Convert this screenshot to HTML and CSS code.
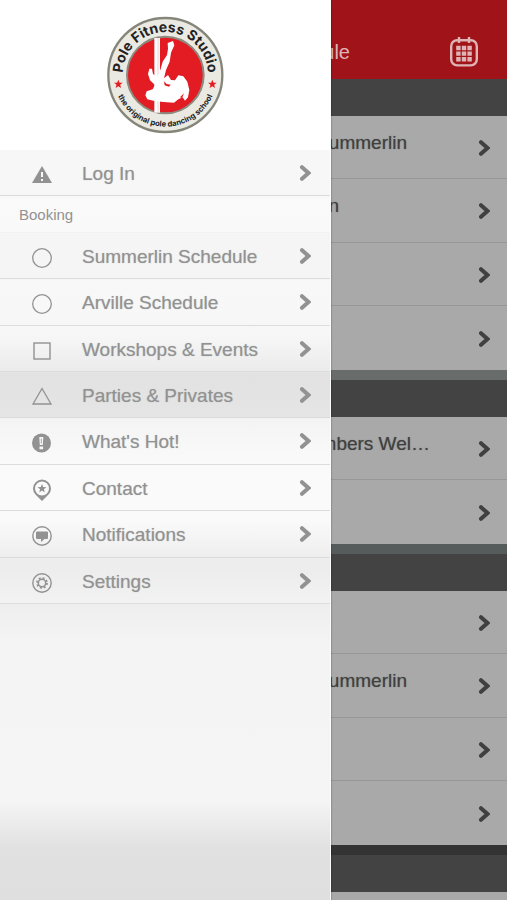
FILE: index.html
```
<!DOCTYPE html>
<html lang="en">
<head>
    <meta charset="UTF-8">
    <meta name="viewport" content="width=device-width,initial-scale=1.0">
    <title>Pole Fitness Studio</title>
    <link rel="stylesheet" href="styles.css">
</head>
<body>
    <svg class="sprite" width="0" height="0" aria-hidden="true">
        <symbol id="chevron" viewBox="0 0 12 16">
            <path d="M3 2.200 L9.500 8 L3 13.800" fill="none" stroke="currentColor" stroke-width="4" stroke-linecap="round" stroke-linejoin="miter"/>
        </symbol>
    </svg>
    <div class="app">
        <main class="schedule">
            <header class="topbar">
                <h1>Schedule</h1>
                <button class="calendar" type="button" aria-label="Calendar">
                    <svg width="28" height="30" viewBox="0 0 28 30" fill="none" stroke="currentColor">
                        <rect x="1.2" y="3.2" width="25.6" height="25.2" rx="6" stroke-width="2.4"/>
                        <path d="M9 0v6M19 0v6" stroke-width="2.4"/>
                        <path d="M6.200 11h15.600M6.200 16.600h15.600M6.200 22.200h15.600" stroke-width="4.4" stroke-dasharray="4.4 1.2"/>
                    </svg>
                </button>
            </header>
            <section>
                <div class="day"></div>
                <ul class="classes">
                    <li><a href="#"><span class="name">Summerlin</span><svg class="chevron"><use href="#chevron"/></svg></a></li>
                    <li><a href="#"><span class="name short">n</span><svg class="chevron"><use href="#chevron"/></svg></a></li>
                    <li><a href="#" aria-label="Class"><svg class="chevron"><use href="#chevron"/></svg></a></li>
                    <li><a href="#" aria-label="Class"><svg class="chevron"><use href="#chevron"/></svg></a></li>
                </ul>
            </section>
            <section>
                <div class="day"></div>
                <ul class="classes">
                    <li><a href="#"><span class="name long">Members Wel…</span><svg class="chevron"><use href="#chevron"/></svg></a></li>
                    <li><a href="#" aria-label="Class"><svg class="chevron"><use href="#chevron"/></svg></a></li>
                </ul>
            </section>
            <section>
                <div class="day"></div>
                <ul class="classes">
                    <li><a href="#" aria-label="Class"><svg class="chevron"><use href="#chevron"/></svg></a></li>
                    <li><a href="#"><span class="name">Summerlin</span><svg class="chevron"><use href="#chevron"/></svg></a></li>
                    <li><a href="#" aria-label="Class"><svg class="chevron"><use href="#chevron"/></svg></a></li>
                    <li><a href="#" aria-label="Class"><svg class="chevron"><use href="#chevron"/></svg></a></li>
                </ul>
            </section>
            <section>
                <div class="day"></div>
                <ul class="classes">
                    <li></li>
                </ul>
            </section>
        </main>

        <nav class="drawer">
            <div class="brand">
                <svg class="logo" viewBox="0 0 390 390" role="img" aria-label="Pole Fitness Studio">
                    <defs>
                        <path id="arc-top" d="M69 210 A128 128 0 1 1 323 210"/>
                        <path id="arc-bottom" d="M41 195 A155 155 0 0 0 351 195"/>
                    </defs>
                    <circle cx="196" cy="195" r="171" fill="#eae9e2" stroke="#85857a" stroke-width="7"/>
                    <circle cx="196" cy="195" r="115" fill="#e31b23" stroke="#8d8b80" stroke-width="6"/>
                    <path d="M163 84h17v224h-17z" fill="#fff"/>
                    <path d="M174 84v224" stroke="#f4b5b5" stroke-width="2"/>
                    <path fill="#fff" d="M203 99 L219 93 L223 106 L213 128 L209 155 L198 180 L192 205 L204 195 L213 210 L225 211 L235 196 L250 199 L262 215 L268 240 L264 262 L255 272 L248 262 L235 268 L222 278 L190 276 L160 272 L142 268 L136 256 L140 244 L158 238 L165 225 L150 211 L144 192 L148 176 L156 176 L159 192 L172 200 L181 180 L188 155 L201 135 L204 116 Z"/>
                    <path d="M192 214 L200 222 L212 224 L207 230 L194 226 Z M240 262 L252 250 L246 264 Z" fill="#e31b23"/>
                    <g fill="#e31b23">
                        <path id="star" d="M55 209 l3.500 9 l9.500 .5 l-7.500 6 l2.700 9.500 l-8.200 -5.500 l-8.200 5.500 l2.700 -9.500 l-7.500 -6 l9.500 -.5z"/>
                        <use href="#star" x="282"/>
                    </g>
                    <text class="logo-name"><textPath href="#arc-top" startOffset="50%">Pole Fitness Studio</textPath></text>
                    <text class="logo-tag"><textPath href="#arc-bottom" startOffset="50%">the original pole dancing school</textPath></text>
                </svg>
            </div>
            <ul class="menu account">
                <li><a href="#">
                    <svg class="icon" viewBox="0 0 20 20"><path d="M10 1 L20 18 H0z" fill="currentColor"/><path d="M10 7v5M10 14v2" stroke="#f7f7f7" stroke-width="2"/></svg>
                    <span>Log In</span><svg class="chevron"><use href="#chevron"/></svg>
                </a></li>
            </ul>
            <h2>Booking</h2>
            <ul class="menu">
                <li><a href="#">
                    <svg class="icon" viewBox="0 0 20 20"><circle cx="10" cy="10" r="9.300" fill="none" stroke="currentColor" stroke-width="1.300"/></svg>
                    <span>Summerlin Schedule</span><svg class="chevron"><use href="#chevron"/></svg>
                </a></li>
                <li><a href="#">
                    <svg class="icon" viewBox="0 0 20 20"><circle cx="10" cy="10" r="9.300" fill="none" stroke="currentColor" stroke-width="1.300"/></svg>
                    <span>Arville Schedule</span><svg class="chevron"><use href="#chevron"/></svg>
                </a></li>
                <li><a href="#">
                    <svg class="icon" viewBox="0 0 20 20"><rect x="2" y="2" width="16" height="16" fill="none" stroke="currentColor" stroke-width="1.400"/></svg>
                    <span>Workshops &amp; Events</span><svg class="chevron"><use href="#chevron"/></svg>
                </a></li>
                <li><a href="#">
                    <svg class="icon" viewBox="0 0 20 20"><path d="M10 1.500 L19 17 H1z" fill="none" stroke="currentColor" stroke-width="1.300"/></svg>
                    <span>Parties &amp; Privates</span><svg class="chevron"><use href="#chevron"/></svg>
                </a></li>
                <li><a href="#">
                    <svg class="icon" viewBox="0 0 20 20"><circle cx="9.500" cy="10" r="9.500" fill="currentColor"/><path d="M7.300 4h4l-.5 8H7.800zM7.500 13.400h3.600v2.800H7.500z" fill="#f7f7f7"/><path d="M9.300 5.500v5" stroke="currentColor" stroke-width=".8"/></svg>
                    <span>What's Hot!</span><svg class="chevron"><use href="#chevron"/></svg>
                </a></li>
                <li><a href="#">
                    <svg class="icon" viewBox="0 0 20 22"><circle cx="10" cy="9.500" r="8" fill="none" stroke="currentColor" stroke-width="2"/><path d="M4 16 Q10 19 16 16 L10 22z" fill="currentColor"/><path d="M10 5 l1.200 3 3.300 .2 -2.600 2 .9 3.200 -2.800 -1.800 -2.800 1.800 .9 -3.200 -2.600 -2 3.300 -.2z" fill="currentColor"/></svg>
                    <span>Contact</span><svg class="chevron"><use href="#chevron"/></svg>
                </a></li>
                <li><a href="#">
                    <svg class="icon" viewBox="0 0 20 20"><circle cx="10" cy="10" r="9.200" fill="none" stroke="currentColor" stroke-width="1.400"/><path d="M5 5.500h10q1 0 1 1v5.500q0 1-1 1h-2.500l-3.500 3v-3H5q-1 0-1-1V6.500q0-1 1-1z" fill="currentColor"/></svg>
                    <span>Notifications</span><svg class="chevron"><use href="#chevron"/></svg>
                </a></li>
                <li><a href="#">
                    <svg class="icon" viewBox="0 0 20 20" fill="none" stroke="currentColor"><circle cx="10" cy="10" r="9.200" stroke-width="1.400"/><circle cx="10" cy="10" r="3.700" stroke-width="1.500"/><circle cx="10" cy="10" r="5" stroke-width="1.800" stroke-dasharray="1.960 1.960"/></svg>
                    <span>Settings</span><svg class="chevron"><use href="#chevron"/></svg>
                </a></li>
            </ul>
        </nav>
    </div>
</body>
</html>
```
FILE: styles.css
```
*{
    margin: 0;
    padding: 0;
    box-sizing: border-box;
}
body{
    font-family: "Liberation Sans", Arial, Helvetica, sans-serif;
    font-size: 19px;
    line-height: 24px;
}
a{
    text-decoration: none;
    color: inherit;
}
ul{
    list-style: none;
}
.sprite{
    position: absolute;
}
.app{
    position: relative;
    height: 100vh;
    overflow: hidden;
}
.chevron{
    flex: none;
    width: 12px;
    height: 16px;
}

/* schedule behind the drawer */
.schedule{
    background-color: #434343;
    color: #404040;
}
.topbar{
    display: flex;
    justify-content: flex-end;
    align-items: center;
    gap: 100px;
    height: 79px;
    padding: 25px 29px 0 0;
    background-color: #a01319;
    color: #dfb4b6;
}
.topbar h1{
    font-size: 20px;
    font-weight: normal;
}
.calendar{
    display: flex;
    border: none;
    background: none;
    color: inherit;
    cursor: pointer;
}
.day{
    height: 37px;
    background-color: #434343;
}
.classes{
    border-bottom: 10px solid #686c6b;
}
section:nth-of-type(2) .classes{
    border-color: #565c5b;
}
section:nth-of-type(3) .classes{
    border-color: #333333;
}
.classes li{
    height: 63px;
    background-color: #a9a9a9;
    border-bottom: 1px solid #979797;
}
.classes li:nth-child(even){
    height: 64px;
}
.classes li:last-child{
    border-bottom: none;
}
.classes a{
    display: flex;
    justify-content: flex-end;
    align-items: center;
    height: 100%;
    padding: 1px 17px 0 0;
}
.name{
    padding: 0 71px 10px 0;
    text-shadow: 0 0 1px #40404099;
}
.name.short{
    padding-right: 139px;
}
.name.long{
    padding-right: 48px;
}

/* slide-out menu */
.drawer{
    position: absolute;
    top: 0;
    bottom: 0;
    left: 0;
    width: calc(100% - 176px);
    border-right: 1px solid #fcfcfc;
    background: linear-gradient(#f7f7f7 196px, #fafafa 200px, #f9f9f9 232px, #f5f5f5 234px, #f5f5f5 278px, #f8f8f8 282px, #f7f7f7 335px, #ebebeb 371px, #e2e2e2 373px, #e5e5e5 417px, #f4f4f4 419px, #fafafa 464px, #fafafa 520px, #eeeeee 557px, #ededed 570px, #f2f2f2 603px, #eeeeee 605px, #f4f4f4 642px, #f5f5f5 800px, #e1e1e1 848px, #dfdfdf 900px);
    box-shadow: 0 0 2px #00000066;
    color: #929292;
}
.brand{
    display: flex;
    justify-content: center;
    height: 150px;
    padding-top: 10px;
    background-color: #ffffff;
}
.logo{
    width: 130px;
    height: 130px;
}
.logo-name,
.logo-tag{
    font-family: Inter, sans-serif;
    font-weight: 700;
    text-anchor: middle;
    fill: #222222;
}
.logo-name{
    font-size: 42px;
}
.logo-tag{
    font-size: 23px;
}
.menu li{
    height: 46px;
    border-bottom: 1px solid #dcdcdc;
}
.menu li:nth-child(2),
.menu li:nth-child(5),
.menu li:nth-child(7){
    height: 47px;
}
.menu a{
    display: flex;
    align-items: center;
    height: 100%;
    padding: 0 19px 0 32px;
}
.menu span{
    flex: 1;
    padding: 2px 0 0 30px;
    text-shadow: 0 0 1px #92929299;
}
.icon{
    flex: none;
    width: 20px;
    height: 22px;
    margin-top: 4px;
}
.drawer h2{
    height: 37px;
    padding-left: 19px;
    border-bottom: 1px solid #f2f2f2;
    font-size: 15px;
    font-weight: normal;
    line-height: 38px;
}
```
